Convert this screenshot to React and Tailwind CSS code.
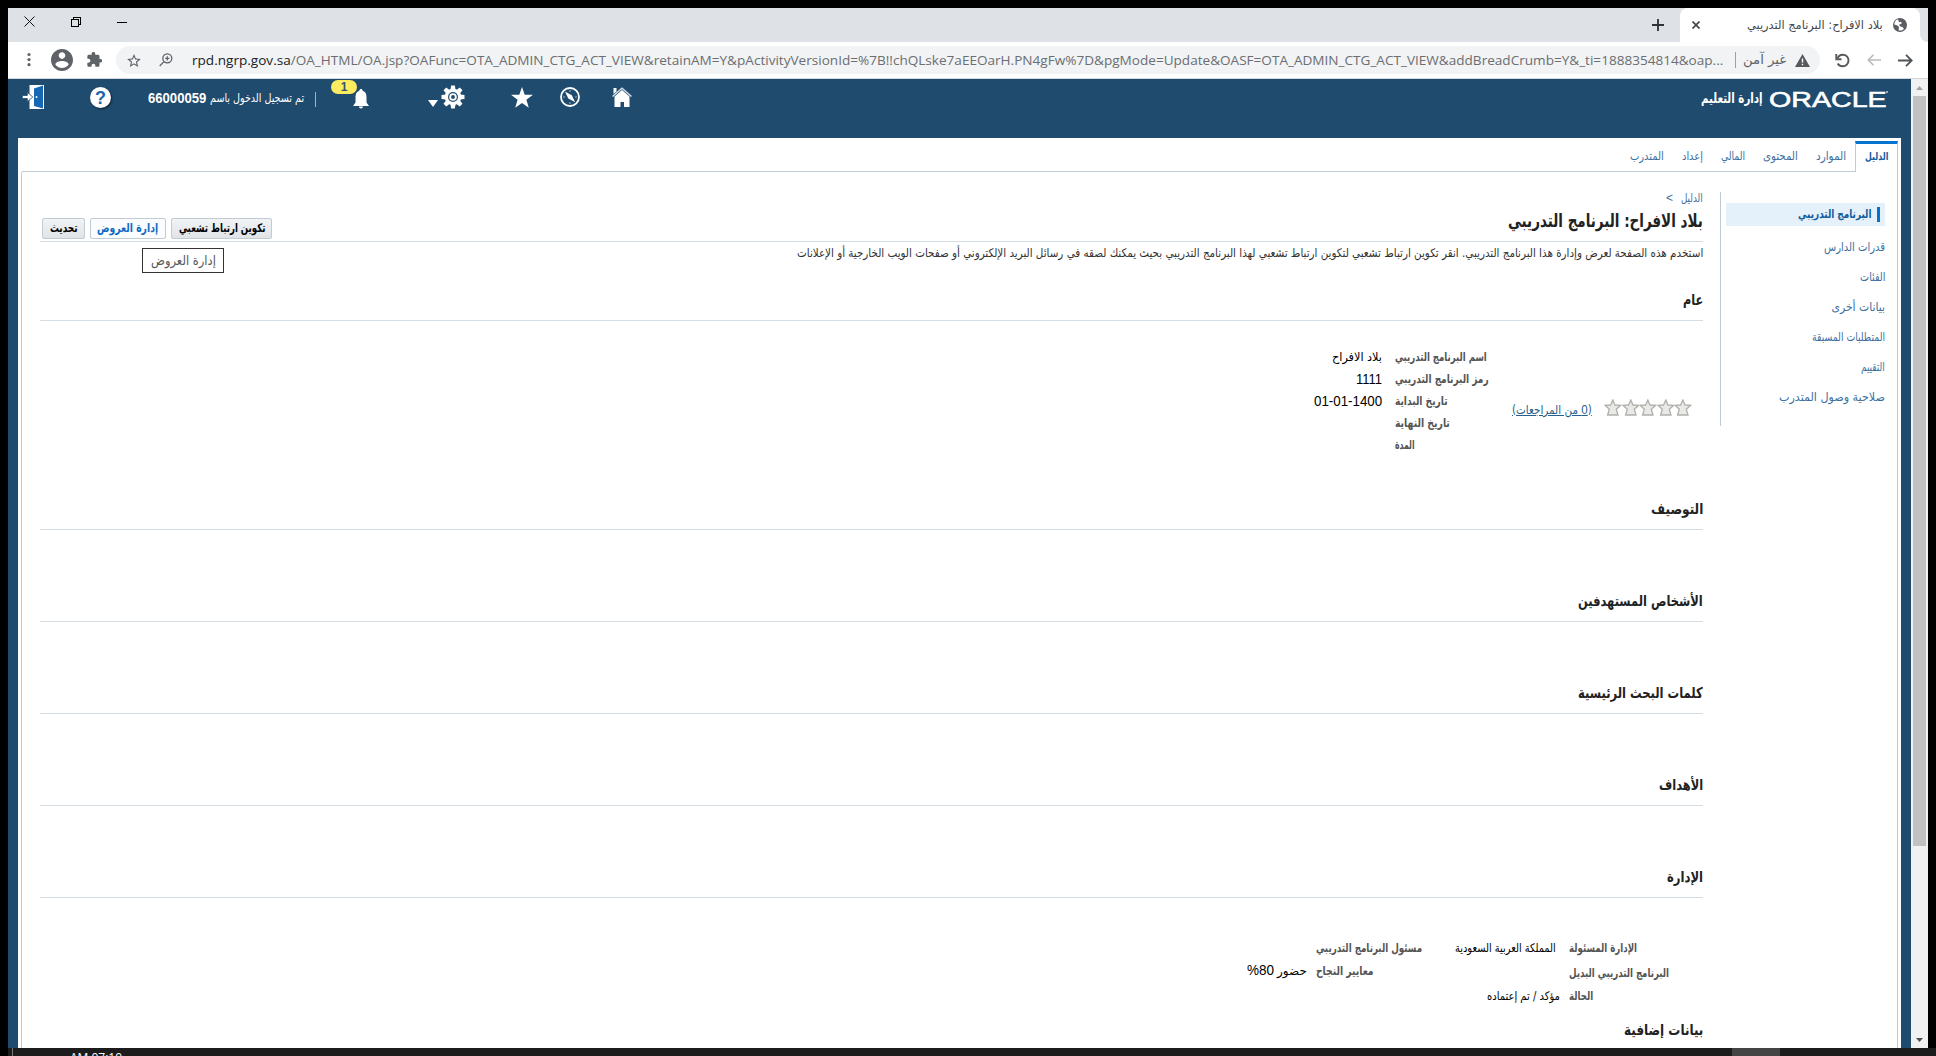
import React, { useLayoutEffect, useRef } from "react";

const AR = "font-['DejaVu_Sans_Condensed','DejaVu_Sans',sans-serif]";

// Single line of text stretched to a fixed measure.
function Fit({ w, h = "h-5", className = "", dir = "rtl", children }) {
  const inner = useRef(null);
  useLayoutEffect(() => {
    const el = inner.current;
    el.style.transform = `scaleX(${w / el.offsetWidth})`;
  }, [w]);
  return (
    <span dir={dir} style={{ width: w }} className={`flex shrink-0 items-center whitespace-nowrap ${h} ${className}`}>
      <span ref={inner} className={dir === "rtl" ? "inline-block origin-right shrink-0" : "inline-block origin-left shrink-0"}>
        {children}
      </span>
    </span>
  );
}

function TabStrip() {
  return (
    <div className="flex h-[34px] bg-[#dee1e6]">
      <div className="flex w-[130px] pl-[17px] pt-2">
        <svg width="11" height="11" viewBox="0 0 11 11" className="-ml-px" stroke="#111" fill="none"><path d="M.5.5l10 10M10.5.5l-10 10" /></svg>
        <svg width="10" height="10" viewBox="0 0 10 10" className="ml-9 mt-px" stroke="#000" fill="none" shapeRendering="crispEdges"><path d="M.5 2.5h7v7h-7zM2.5 2V.5h7v7H8" /></svg>
        <div className="ml-9 mt-[6px] h-px w-[10px] bg-black" />
      </div>
      <div className="flex-1" />
      <svg width="12" height="12" viewBox="0 0 12 12" className="mt-[11px] mr-4" stroke="#303236" strokeWidth="1.8"><path d="M6 0v12M0 6h12" /></svg>
      <div className="flex h-[34px] w-[240px] rounded-t-lg bg-white">
        <svg width="8" height="8" viewBox="0 0 8 8" className="ml-3 mt-[13px]" stroke="#44474b" strokeWidth="1.7"><path d="M.5.5l7 7M7.5.5l-7 7" /></svg>
        <Fit w={136} h="h-[34px]" className={`${AR} ml-[47px] text-[12px] text-[#45494d]`}>بلاد الافراح: البرنامج التدريبي</Fit>
        <svg width="14" height="14" viewBox="0 0 14 14" className="ml-[10px] mt-[10px]">
          <circle cx="7" cy="7" r="7" fill="#5a5d61" />
          <path d="M5 1.3C2.500 2 1.200 4.500 1.300 6.500l3.200 1 1.500 1.500-.4 3.300C8 13 10 12.200 11 11l-1.500-2-2.200-.5L6 6.800 8.800 5.500 8 3.700l-2 .5z" fill="#fff" />
        </svg>
      </div>
      <div className="w-2 bg-white"><div className="h-full w-2 rounded-bl-lg bg-[#dee1e6]" /></div>
    </div>
  );
}

function Toolbar() {
  return (
    <div className="flex h-[37px] items-center border-b border-[#d5d7da] bg-white">
      <svg width="4" height="16" viewBox="0 0 4 16" className="ml-[19px]" fill="#5f6368"><circle cx="2" cy="2.500" r="1.600" /><circle cx="2" cy="7.600" r="1.600" /><circle cx="2" cy="12.700" r="1.600" /></svg>
      <svg width="22" height="22" viewBox="2 2 20 20" className="ml-5" fill="#5f6368"><path d="M12 2C6.480 2 2 6.480 2 12s4.480 10 10 10 10-4.480 10-10S17.520 2 12 2zm0 3c1.660 0 3 1.340 3 3s-1.340 3-3 3-3-1.340-3-3 1.340-3 3-3zm0 14.200c-2.500 0-4.710-1.280-6-3.220.03-1.990 4-3.080 6-3.080 1.990 0 5.970 1.090 6 3.080-1.290 1.940-3.500 3.220-6 3.220z" /></svg>
      <svg width="15" height="15" viewBox="1.500 1.500 21 20.500" className="ml-[14px] -mt-px" fill="#5f6368"><path d="M20.500 11H19V7c0-1.100-.9-2-2-2h-4V3.500C13 2.120 11.880 1 10.500 1S8 2.120 8 3.500V5H4c-1.100 0-1.990.9-1.990 2v3.800H3.500c1.490 0 2.700 1.210 2.700 2.700s-1.210 2.700-2.700 2.700H2V20c0 1.100.9 2 2 2h3.800v-1.500c0-1.490 1.210-2.700 2.700-2.700s2.700 1.210 2.700 2.700V22H17c1.100 0 2-.9 2-2v-4h1.500c1.380 0 2.500-1.120 2.500-2.500S21.880 11 20.500 11z" /></svg>
      <div className="ml-[14px] flex h-7 w-[1704px] items-center rounded-full bg-[#f1f3f4]">
        <svg width="14" height="13" viewBox="2 2 20 19" className="ml-[11px]" fill="#5f6368"><path d="M22 9.240l-7.190-.62L12 2 9.190 8.630 2 9.240l5.460 4.730L5.820 21 12 17.270 18.180 21l-1.630-7.030L22 9.240zM12 15.400l-3.760 2.270 1-4.280-3.320-2.880 4.380-.38L12 6.100l1.710 4.040 4.380.38-3.320 2.880 1 4.280L12 15.400z" /></svg>
        <svg width="14" height="14" viewBox="0 0 14 14" className="ml-[18px]" fill="none" stroke="#5f6368" strokeWidth="1.300"><circle cx="8.300" cy="5.300" r="4.500" /><path d="M5 8.600L.7 13M8.300 3.200v4.200M6.200 5.300h4.200" /></svg>
        <Fit w={1531} h="h-7" dir="ltr" className="ml-[19px] font-['Open_Sans',sans-serif] text-[13.500px] text-[#6b6e72]">
          <span className="text-[#202124]">rpd.ngrp.gov.sa</span>/OA_HTML/OA.jsp?OAFunc=OTA_ADMIN_CTG_ACT_VIEW&amp;retainAM=Y&amp;pActivityVersionId=%7B!!chQLske7aEEOarH.PN4gFw%7D&amp;pgMode=Update&amp;OASF=OTA_ADMIN_CTG_ACT_VIEW&amp;addBreadCrumb=Y&amp;_ti=1888354814&amp;oap...
        </Fit>
        <div className="ml-3 h-4 w-px bg-[#9aa0a6]" />
        <Fit w={43} h="h-7" className={`${AR} ml-[7px] text-[13px] text-[#5f6368]`}>غير آمن</Fit>
        <svg width="15" height="13" viewBox="0 0 15 13" className="ml-[9px]"><path d="M7.500 0L15 13H0z" fill="#55585c" /><path d="M7.500 4.500v4M7.500 9.700v1.600" stroke="#fff" strokeWidth="1.400" /></svg>
      </div>
      <svg width="15" height="15" viewBox="0 0 15 15" className="ml-[15px]" fill="none" stroke="#55585c" strokeWidth="1.900"><path d="M2.500 5.500C3.500 3 5.500 1.700 7.800 1.700c3.300 0 5.700 2.600 5.700 5.800s-2.500 5.800-5.800 5.800c-2.200 0-4-1-5-2.800" /><path d="M1.300 1v5.200h5.200" /></svg>
      <svg width="14" height="12" viewBox="0 0 14 12" className="ml-[17px]" fill="none" stroke="#babcbe" strokeWidth="1.600"><path d="M14 6H1.500M6.500.8L1.300 6l5.200 5.200" /></svg>
      <svg width="15" height="13" viewBox="0 0 15 13" className="ml-[17px]" fill="none" stroke="#505357" strokeWidth="1.800"><path d="M0 6.500h13.500M8 .8l5.700 5.700L8 12.200" /></svg>
    </div>
  );
}

function GlobalHeader() {
  return (
    <div className="flex h-[59px] items-start">
      <svg width="23" height="26" viewBox="0 0 23 26" className="ml-[14px] mt-[5px]">
        <path d="M7.500 1H22v24H7.500z" fill="#fff" />
        <path d="M12 4.500l9-3v23l-9-2.500z" fill="#1668b5" /><circle cx="14.500" cy="13" r="1" fill="#fff" />
        <path d="M.3 11.500h5V8.300l5.500 4.700-5.500 4.700v-3.200h-5z" fill="#fff" stroke="#1f4b6e" strokeWidth=".8" />
      </svg>
      <div className="ml-[45px] mt-2 flex size-[21px] items-center justify-center rounded-full bg-white font-['Liberation_Sans',sans-serif] text-[18px] leading-none font-bold text-[#1b66a8] shadow-[1px_1px_2px_#123]">?</div>
      <div className="ml-[37px] mt-[9px] flex items-center text-white">
        <Fit w={58} dir="ltr" className="font-['Liberation_Sans',sans-serif] text-[14px] font-bold">66000059</Fit>
        <Fit w={94} className={`${AR} ml-[4px] text-[12px]`}>تم تسجيل الدخول باسم</Fit>
      </div>
      <div className="ml-[11px] mt-[13px] h-[15px] w-px bg-[#9db4c6]" />
      <div className="relative ml-[15px] h-8 w-[40px]">
        <svg width="16" height="20" viewBox="0 0 16 20" className="absolute left-[22px] top-[10px]" fill="#fff"><path d="M8 0c1 0 1.600.7 1.600 1.700C12.500 2.500 13.500 5 13.500 8v5.500L16 17H0l2.500-3.500V8c0-3 1-5.500 3.900-6.300C6.400.7 7 0 8 0zM6 17.600h4c0 1.200-.8 2-2 2s-2-.8-2-2z" /></svg>
        <div className="absolute left-0 top-px flex h-[14px] w-[26px] items-center justify-center rounded-full bg-[#fcec5f] font-['Liberation_Sans',sans-serif] text-[12px] font-bold text-[#34546b]">1</div>
      </div>
      <svg width="10" height="7" viewBox="0 0 10 7" className="ml-[57px] mt-[21px]"><path d="M0 0h10L5 7z" fill="#fff" /></svg>
      <svg width="24" height="24" viewBox="-12 -12 24 24" className="ml-[3px] mt-[6px]">
        <g fill="#fff">
          {[0, 45, 90, 135, 180, 225, 270, 315].map((a) => <path key={a} d="M-2.500-7l.6-4.500h3.800L2.500-7z" transform={`rotate(${a})`} />)}
          <circle r="8.300" />
        </g>
        <circle r="5" fill="#1f4b6e" /><circle r="3.800" fill="#fff" /><circle r="1.900" fill="#1f4b6e" />
      </svg>
      <svg width="22" height="21" viewBox="0 0 22 21" className="ml-[46px] mt-2"><path d="M11 0l2.700 7.700H22l-6.600 5 2.400 8L11 16l-6.800 4.700 2.400-8L0 7.700h8.300z" fill="#fff" /></svg>
      <svg width="20" height="20" viewBox="0 0 20 20" className="ml-[27px] mt-2"><circle cx="10" cy="10" r="9" fill="none" stroke="#fff" strokeWidth="1.800" /><path d="M10 3v2M10 15v2M3 10h2M15 10h2" stroke="#9db4c6" /><path d="M5 4.500l6.800 3.800 3.400 7-6.900-3.900z" fill="#fff" /></svg>
      <svg width="20" height="20" viewBox="0 0 20 20" className="ml-8 mt-2"><path d="M2.500 9.500L10 3l7.500 6.500V20H12v-5H8.500v5h-6z" fill="#fff" /><path d="M.5 9.500L10 1.200l9.500 8.300" fill="none" stroke="#d6e0e8" strokeWidth="1.500" /><path d="M1.500 1h3v3.500l-3 2.500z" fill="#fff" /></svg>
      <div className="flex-1" />
      <Fit w={62} h="h-[22px]" className={`${AR} mr-[6px] mt-2 text-[14px] font-bold text-white`}>إدارة التعليم</Fit>
      <Fit w={117} h="h-[22px]" dir="ltr" className="mt-[9px] font-['Liberation_Sans',sans-serif] text-[22px] text-white [-webkit-text-stroke:0.600px_white]">ORACLE</Fit>
      <div className="mr-[23px] mt-[12px] size-[2px] rounded-full bg-[#c6d3dd]" />
    </div>
  );
}

const tabs = [["الموارد", 30, "mr-[9px]"], ["المحتوى", 35, "mr-[18px]"], ["المالي", 24, "mr-[18px]"], ["إعداد", 21, "mr-[18px]"], ["المتدرب", 34, "mr-[18px]"]];

function TabBar() {
  return (
    <div className="flex h-[34px] pr-[3px] pl-1">
      <div className="mt-[3px] flex w-[43px] border-x border-t-[3px] border-x-[#bfccd6] border-t-[#0572ce] pr-[9px]">
        <Fit w={23} h="h-[26px]" className={`${AR} text-[11px] font-bold text-[#145c9e]`}>الدليل</Fit>
      </div>
      <div className="mt-[3px] flex flex-1 border-b border-[#bfccd6]">
        {tabs.map(([t, w, m]) => <Fit key={t} w={w} h="h-[30px]" className={`${AR} ${m} text-[12px] text-[#3d6f9f]`}>{t}</Fit>)}
      </div>
    </div>
  );
}

const links = [["قدرات الدارس", 61], ["الفئات", 25], ["بيانات أخرى", 54], ["المتطلبات المسبقة", 73], ["التقييم", 24], ["صلاحية وصول المتدرب", 106]];

function Sidebar() {
  return (
    <div className="mt-5 flex h-[234px] w-[177px] shrink-0 flex-col border-l border-[#bfccd6] pt-[11px] pr-3 pl-[5px]">
      <div className="flex h-[23px] items-center bg-[#e4f0fa] pr-[5px]">
        <div className="h-[15px] w-[3px] bg-[#0572ce]" />
        <Fit w={73} className={`${AR} mr-[6px] text-[11.500px] font-bold text-[#145c9e]`}>البرنامج التدريبي</Fit>
      </div>
      <div className="mt-[6px] flex flex-col">
        {links.map(([t, w]) => <Fit key={t} w={w} h="h-[30px]" className={`${AR} text-[12px] text-[#3d6f9f]`}>{t}</Fit>)}
      </div>
    </div>
  );
}

function Btn({ w, width, active, children }) {
  return (
    <div className={`${width} flex h-[21px] items-start justify-center rounded-[2px] border border-[#c0cbd5] ${active ? "bg-[#fafcfd] text-[#0f6ac4]" : "bg-linear-to-b from-[#f1f3f5] to-[#e1e4e7] text-black"}`}>
      <Fit w={w} h="h-[17px]" className={`${AR} text-[12px] font-bold`}>{children}</Fit>
    </div>
  );
}

function Section({ title, w, gap }) {
  return (
    <div className={`${gap} flex h-8 border-b border-[#d5dde4]`}>
      <Fit w={w} h="h-[22px]" className={`${AR} text-[15px] font-bold text-[#222]`}>{title}</Fit>
    </div>
  );
}

function Label({ w, h = "h-[22px]", children }) {
  return <Fit w={w} h={h} className={`${AR} text-[12px] font-bold text-[#555]`}>{children}</Fit>;
}

const val = `${AR} text-[12px] text-black`;
const num = "font-['Liberation_Sans',sans-serif] text-[14.500px] text-black";

function Star() {
  return (
    <svg width="17.600" height="17" viewBox="0 0 17.600 17"><path d="M8.800 1l2.200 5 5.700.3-4.400 3.900 1.700 5.800H3.600l1.700-5.800L1 6.300l5.600-.3z" fill="#e9e9e7" stroke="#b0b0ab" strokeWidth="1.300" /></svg>
  );
}

function General() {
  return (
    <div className="mt-[26px] flex h-[110px]">
      <div className="mr-[11px] mt-[52px] flex h-[17px]">{[0, 1, 2, 3, 4].map((i) => <Star key={i} />)}</div>
      <Fit w={80} className={`${AR} mr-3 mt-[53px] text-[12px] text-[#265f8d] underline`}>(<span className="font-['Liberation_Sans',sans-serif]">0</span> من المراجعات)</Fit>
      <div className="mr-[23px] -mt-px flex w-[94px] flex-col items-end">
        <Label w={92}>اسم البرنامج التدريبي</Label>
        <Label w={94}>رمز البرنامج التدريبي</Label>
        <Label w={53}>تاريخ البداية</Label>
        <Label w={55}>تاريخ النهاية</Label>
        <Label w={20}>المدة</Label>
      </div>
      <div className="mr-[13px] -mt-px flex flex-col">
        <Fit w={50} h="h-[22px]" className={`${val} mb-px`}>بلاد الافراح</Fit>
        <Fit w={26} h="h-[22px]" dir="ltr" className={num}>1111</Fit>
        <Fit w={68} h="h-[22px]" dir="ltr" className={num}>01-01-1400</Fit>
      </div>
    </div>
  );
}

function Administration() {
  return (
    <div className="mt-[38px] flex h-[81px]">
      <div className="mr-[34px] flex w-[100px] flex-col items-end">
        <Label w={68} h="h-6">الإدارة المسئولة</Label>
        <Label w={100} h="h-[25px]">البرنامج التدريبي البديل</Label>
        <Label w={24} h="h-[21px]">الحالة</Label>
      </div>
      <div className="mr-[9px] flex w-[105px] flex-col">
        <Fit w={101} h="h-6" className={`${val} mr-[4px]`}>المملكة العربية السعودية</Fit>
        <Fit w={73} h="h-[21px]" className={`${val} mt-[25px]`}>مؤكد / تم إعتماده</Fit>
      </div>
      <div className="mr-[33px] flex w-[106px] flex-col items-end">
        <Label w={106} h="h-6">مسئول البرنامج التدريبي</Label>
        <Label w={58} h="h-[21px]">معايير النجاح</Label>
      </div>
      <div className="mr-[9px] mt-6 flex">
        <Fit w={30} h="h-[21px]" className={val}>حضور</Fit>
        <Fit w={27} h="h-[22px]" dir="ltr" className={`${num} mr-[3px]`}>%80</Fit>
      </div>
    </div>
  );
}

function Content() {
  return (
    <div className="mr-[17px] flex w-[1663px] flex-col">
      <div className="mt-[17px] flex h-[18px] items-center">
        <Fit w={22} className={`${AR} text-[12px] text-[#3d6f9f]`}>الدليل</Fit>
        <span dir="ltr" className="mr-2 font-['Liberation_Sans',sans-serif] text-[12px] text-[#3d6f9f]">&lt;</span>
      </div>
      <div className="relative flex h-[35px] justify-between border-b border-[#d5dde4]">
        <Fit w={195} h="h-[26px]" className={`${AR} text-[18px] font-bold text-[#222]`}>بلاد الافراح: البرنامج التدريبي</Fit>
        <div className="mt-[11px] ml-[2px] flex gap-[5px]">
          <Btn width="w-[101px]" w={87}>تكوين ارتباط تشعبي</Btn>
          <Btn width="w-[76px]" w={61} active>إدارة العروض</Btn>
          <Btn width="w-[43px]" w={28}>تحديث</Btn>
        </div>
        <div className="absolute left-[102px] top-[41px] flex h-[25px] w-[82px] items-center justify-center border border-[#333] bg-white">
          <Fit w={65} className={`${AR} text-[13px] text-[#575757]`}>إدارة العروض</Fit>
        </div>
      </div>
      <Fit w={906} h="h-[22px]" className={`${AR} text-[12px] text-[#333]`}>استخدم هذه الصفحة لعرض وإدارة هذا البرنامج التدريبي. انقر تكوين ارتباط تشعبي لتكوين ارتباط تشعبي لهذا البرنامج التدريبي بحيث يمكنك لصقه في رسائل البريد الإلكتروني أو صفحات الويب الخارجية أو الإعلانات</Fit>
      <Section title="عام" w={20} gap="mt-[25px]" />
      <General />
      <Section title="التوصيف" w={52} gap="mt-[41px]" />
      <Section title="الأشخاص المستهدفين" w={125} gap="mt-[60px]" />
      <Section title="كلمات البحث الرئيسية" w={125} gap="mt-[60px]" />
      <Section title="الأهداف" w={44} gap="mt-[60px]" />
      <Section title="الإدارة" w={36} gap="mt-[60px]" />
      <Administration />
      <Fit w={79} h="h-6" className={`${AR} mt-px text-[15px] font-bold text-[#222]`}>بيانات إضافية</Fit>
    </div>
  );
}

export default function App() {
  return (
    <div dir="ltr" className="flex h-[1056px] w-[1936px] flex-col overflow-hidden bg-black px-2 pt-2">
      <TabStrip />
      <Toolbar />
      <div className="flex h-[969px]">
        <div className="flex w-[1903px] flex-col bg-[#1f4b6e]">
          <GlobalHeader />
          <div dir="rtl" className="mr-[10px] ml-[10px] flex h-[910px] flex-col overflow-hidden bg-white">
            <TabBar />
            <div className="mr-[3px] ml-[3px] flex flex-1 flex-col">
              <div className="flex h-full border-x border-[#bfccd6]">
                <Sidebar />
                <Content />
              </div>
            </div>
          </div>
        </div>
        <div className="flex w-[17px] flex-col items-center bg-[#f1f1f1]">
          <div className="flex h-[17px] items-center"><svg width="7" height="4" viewBox="0 0 7 4" fill="#a3a3a3"><path d="M3.500 0L7 4H0z" /></svg></div>
          <div className="h-[750px] w-[13px] bg-[#c1c1c1]" />
          <div className="flex-1" />
          <div className="flex h-[17px] items-center"><svg width="7" height="4" viewBox="0 0 7 4" fill="#505050"><path d="M0 0h7L3.500 4z" /></svg></div>
        </div>
      </div>
      <div className="-mr-2 flex h-2 overflow-hidden bg-[#1c1c1c]">
        <div className="ml-1 h-2 w-px bg-[#777]" />
        <span className="ml-[57px] mt-[4px] font-['Open_Sans',sans-serif] text-[12px] leading-none text-white">AM 07:10</span>
        <div className="flex-1" />
        <div className="mr-[156px] h-2 w-[48px] bg-[#444]" />
      </div>
    </div>
  );
}
